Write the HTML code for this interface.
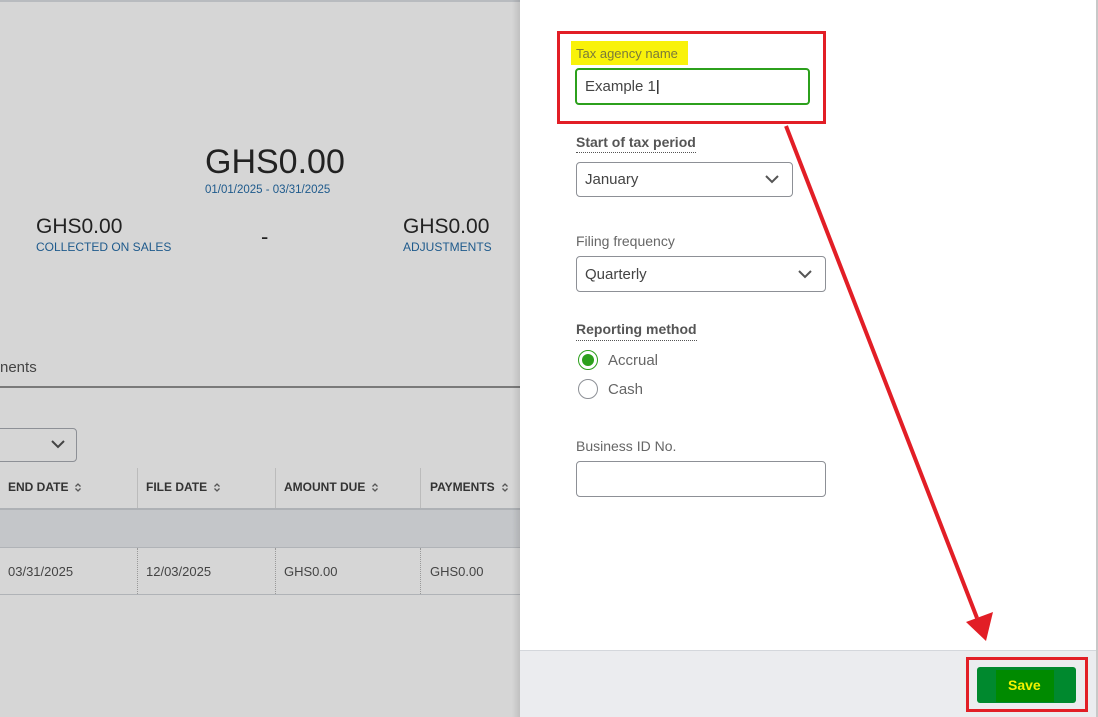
<!DOCTYPE html>
<html><head><style>
body{margin:0;width:1098px;height:717px;position:relative;overflow:hidden;font-family:"Liberation Sans",sans-serif;background:#d6d6d6}
.a{position:absolute}
.bl{color:#1e5a8c}
.th{font-size:12px;font-weight:bold;color:#333;top:480px}
.td{font-size:13px;color:#444;top:564px}
.lab{font-size:14px;color:#666}
.box{border:1px solid #8d9096;border-radius:4px;background:#fff;box-sizing:border-box}
.s{display:inline-block;vertical-align:middle;margin-left:6px}
</style></head><body>
<div class="a" style="left:0;top:0;width:520px;height:2px;background:#b8bbbf"></div>
<div class="a" style="left:205px;top:143px;font-size:34px;color:#222">GHS0.00</div>
<div class="a bl" style="left:205px;top:184px;font-size:11.5px">01/01/2025 - 03/31/2025</div>
<div class="a" style="left:36px;top:215px;font-size:21px;color:#222">GHS0.00</div>
<div class="a bl" style="left:36px;top:240px;font-size:12px">COLLECTED ON SALES</div>
<div class="a" style="left:261px;top:224px;font-size:22px;color:#222">-</div>
<div class="a" style="left:403px;top:215px;font-size:21px;color:#222">GHS0.00</div>
<div class="a bl" style="left:403px;top:240px;font-size:12px">ADJUSTMENTS</div>
<div class="a" style="left:0;top:359px;font-size:15px;color:#444">nents</div>
<div class="a" style="left:0;top:386px;width:520px;height:2px;background:#7a7a7a"></div>
<div class="a" style="left:-10px;top:428px;width:87px;height:34px;border:1px solid #8d9096;border-radius:4px;box-sizing:border-box"></div>
<svg class="a" style="left:50px;top:438px" width="16" height="12"><path d="M2 3 L8 9 L14 3" stroke="#444" stroke-width="2" fill="none"/></svg>
<div class="a th" style="left:8px">END DATE<svg class="s" width="8" height="11"><path d="M1.5 4.5 L4 2 L6.5 4.5 M1.5 6.5 L4 9 L6.5 6.5" stroke="#555" stroke-width="1.3" fill="none"/></svg></div>
<div class="a th" style="left:146px">FILE DATE<svg class="s" width="8" height="11"><path d="M1.5 4.5 L4 2 L6.5 4.5 M1.5 6.5 L4 9 L6.5 6.5" stroke="#555" stroke-width="1.3" fill="none"/></svg></div>
<div class="a th" style="left:284px">AMOUNT DUE<svg class="s" width="8" height="11"><path d="M1.5 4.5 L4 2 L6.5 4.5 M1.5 6.5 L4 9 L6.5 6.5" stroke="#555" stroke-width="1.3" fill="none"/></svg></div>
<div class="a th" style="left:430px">PAYMENTS<svg class="s" width="8" height="11"><path d="M1.5 4.5 L4 2 L6.5 4.5 M1.5 6.5 L4 9 L6.5 6.5" stroke="#555" stroke-width="1.3" fill="none"/></svg></div>
<div class="a" style="left:137px;top:468px;width:1px;height:40px;background:#bbb"></div>
<div class="a" style="left:275px;top:468px;width:1px;height:40px;background:#bbb"></div>
<div class="a" style="left:420px;top:468px;width:1px;height:40px;background:#bbb"></div>
<div class="a" style="left:0;top:508px;width:520px;height:39px;background:#c4c6c9;border-top:2px solid #aeb1b5;box-sizing:border-box"></div>
<div class="a" style="left:0;top:547px;width:520px;height:1px;background:#b0b3b7"></div>
<div class="a td" style="left:8px">03/31/2025</div>
<div class="a td" style="left:146px">12/03/2025</div>
<div class="a td" style="left:284px">GHS0.00</div>
<div class="a td" style="left:430px">GHS0.00</div>
<div class="a" style="left:137px;top:548px;height:46px;border-left:1px dotted #999"></div>
<div class="a" style="left:275px;top:548px;height:46px;border-left:1px dotted #999"></div>
<div class="a" style="left:420px;top:548px;height:46px;border-left:1px dotted #999"></div>
<div class="a" style="left:0;top:594px;width:520px;height:1px;background:#b0b3b7"></div>
<div class="a" style="left:512px;top:0;width:8px;height:717px;background:linear-gradient(90deg,rgba(0,0,0,0),rgba(0,0,0,0.1))"></div>

<div class="a" style="left:520px;top:0;width:576px;height:650px;background:#fff"></div>
<div class="a" style="left:520px;top:650px;width:576px;height:67px;background:#ebecef;border-top:1px solid #d4d7dc;box-sizing:border-box"></div>
<div class="a" style="left:1096px;top:0;width:2px;height:717px;background:#c8c8c8"></div>

<div class="a" style="left:571px;top:41px;width:117px;height:24px;background:#f9f20a"></div>
<div class="a" style="left:576px;top:46px;font-size:13px;color:#7a7a3a">Tax agency name</div>
<div class="a box" style="left:575px;top:68px;width:235px;height:37px;border:2px solid #2ca01c;border-radius:4px"></div>
<div class="a" style="left:585px;top:78px;font-size:15px;color:#444">Example 1<span style="color:#000">|</span></div>
<div class="a" style="left:557px;top:31px;width:269px;height:93px;border:3px solid #e21e26;box-sizing:border-box"></div>

<div class="a" style="left:576px;top:134px;font-size:14px;color:#555;font-weight:bold;border-bottom:1px dotted #555;padding-bottom:2px">Start of tax period</div>
<div class="a box" style="left:576px;top:162px;width:217px;height:35px"></div>
<div class="a" style="left:585px;top:171px;font-size:15px;color:#444">January</div>
<svg class="a" style="left:764px;top:173px" width="16" height="12"><path d="M2 3 L8 9 L14 3" stroke="#555" stroke-width="2" fill="none"/></svg>

<div class="a lab" style="left:576px;top:233px">Filing frequency</div>
<div class="a box" style="left:576px;top:256px;width:250px;height:36px"></div>
<div class="a" style="left:585px;top:266px;font-size:15px;color:#444">Quarterly</div>
<svg class="a" style="left:797px;top:268px" width="16" height="12"><path d="M2 3 L8 9 L14 3" stroke="#555" stroke-width="2" fill="none"/></svg>

<div class="a" style="left:576px;top:321px;font-size:14px;color:#555;font-weight:bold;border-bottom:1px dotted #555;padding-bottom:3px">Reporting method</div>
<div class="a" style="left:578px;top:350px;width:20px;height:20px;border:1px solid #2ca01c;border-radius:50%;box-sizing:border-box"></div>
<div class="a" style="left:582px;top:354px;width:12px;height:12px;background:#2ca01c;border-radius:50%"></div>
<div class="a" style="left:608px;top:352px;font-size:15px;color:#666">Accrual</div>
<div class="a" style="left:578px;top:379px;width:20px;height:20px;border:1px solid #8d9096;border-radius:50%;box-sizing:border-box"></div>
<div class="a" style="left:608px;top:381px;font-size:15px;color:#666">Cash</div>

<div class="a lab" style="left:576px;top:438px">Business ID No.</div>
<div class="a box" style="left:576px;top:461px;width:250px;height:36px"></div>

<div class="a" style="left:977px;top:667px;width:99px;height:36px;background:#00892e;border-radius:3px"></div>
<div class="a" style="left:996px;top:670px;width:58px;height:32px;background:#008a00"></div>
<div class="a" style="left:1008px;top:677px;font-size:14px;font-weight:bold;color:#f2f200">Save</div>
<div class="a" style="left:966px;top:657px;width:122px;height:55px;border:3px solid #e21e26;box-sizing:border-box"></div>

<svg class="a" style="left:0;top:0" width="1098" height="717"><line x1="786" y1="126" x2="977" y2="618" stroke="#e21e26" stroke-width="4"/><polygon points="966,622 993,612 986,641" fill="#e21e26"/></svg>
</body></html>
